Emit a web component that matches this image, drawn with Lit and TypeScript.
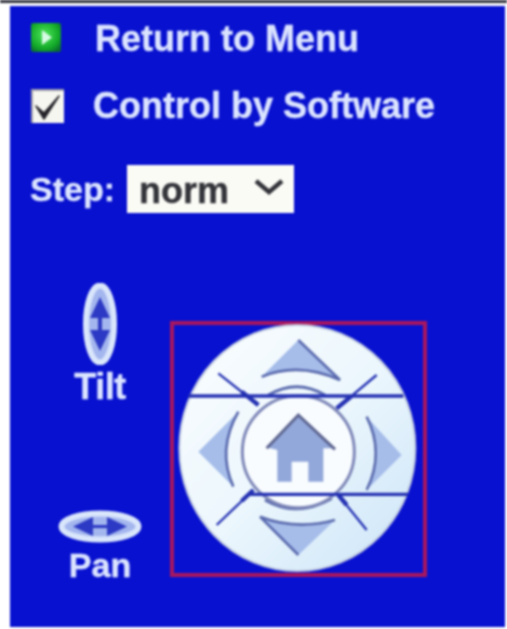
import { LitElement, html, css, svg } from "lit";
import { customElement } from "lit/decorators.js";

const arrowFill = "#a6bdea";
const edge = "#5a6aae";
const line = "#2431b2";

@customElement("app-root")
export class AppRoot extends LitElement {
  static styles = css`
    :host { display: block; width: 507px; height: 629px; background: #fff; overflow: hidden; }
    .page { height: 629px; box-sizing: border-box; border-top: 3px solid #30323c; padding: 3px 2px 2px 10px; filter: blur(0.8px); }
    .panel { height: 621px; box-sizing: border-box; background: #0811cf; padding: 16px 0 0 20px; color: #dbe4ff;
      font: bold 36px/36px "Liberation Sans", Arial, sans-serif; -webkit-text-stroke: 0.4px currentColor; display: flex; flex-direction: column; }
    .row { display: flex; align-items: center; }
    .row1 { height: 30px; gap: 34px; margin-left: 1px; }
    .row1 span { padding-top: 4px; }
    .row2 { height: 34px; gap: 29px; margin: 37px 0 0 1px; }
    .row3 { height: 48px; margin-top: 42px; gap: 12px; font-size: 34px; }
    .play { width: 30px; height: 29px; display: block; }
    .check { width: 33px; height: 34px; display: block; }
    .select { width: 167px; height: 48px; box-sizing: border-box; background: #fbfbf6; color: #33343a; display: flex; align-items: center;
      justify-content: space-between; padding: 3px 10px 0 12px; font-size: 36px; }
    .select svg { width: 30px; height: 16px; display: block; margin-top: -7px; }
    .lower { display: flex; margin-top: 70px; padding-left: 10px; gap: 10px; align-items: flex-start; }
    .side { width: 120px; height: 299px; display: flex; flex-direction: column; justify-content: space-between; align-items: center; }
    .axis { display: flex; flex-direction: column; align-items: center; gap: 5px; }
    .axis span { line-height: 34px; }
    .tname { font-size: 36px; letter-spacing: -0.5px; }
    .pname { font-size: 34px; }
    .tilt { width: 34px; height: 82px; display: block; }
    .pan { width: 84px; height: 33px; display: block; }
    .box { width: 257px; height: 256px; box-sizing: border-box; border: 4px solid #a8175f; margin-top: 38px; }
    .box svg { width: 249px; height: 248px; display: block; overflow: visible; }
  `;

  private pad() {
    return svg`
      <defs>
        <linearGradient id="disc" x1="0" y1="0" x2="1" y2="1">
          <stop offset="0" stop-color="#fbfdff"/>
          <stop offset="0.5" stop-color="#ecf7fd"/>
          <stop offset="1" stop-color="#cbe4f8"/>
        </linearGradient>
      </defs>
      <ellipse cx="412" cy="414" rx="354" ry="369" fill="url(#disc)" stroke="#c0cadf" stroke-width="6"/>

      <path d="M415 90 L540 210 Q415 150 305 200 Q355 150 415 90 Z" fill="${arrowFill}"/>
      <path d="M305 200 Q415 155 540 210 L415 90" fill="none" stroke="${edge}" stroke-width="8"/>
      <path d="M115 425 L235 305 Q165 420 220 530 Z" fill="${arrowFill}"/>
      <path d="M235 305 Q170 420 220 530" fill="none" stroke="${edge}" stroke-width="8"/>
      <path d="M725 435 L620 320 Q685 430 620 540 Z" fill="${arrowFill}"/>
      <path d="M620 320 Q675 430 620 540" fill="none" stroke="${edge}" stroke-width="8"/>
      <path d="M415 735 L300 620 Q410 670 525 630 Z" fill="${arrowFill}"/>
      <path d="M300 620 Q410 662 525 630 M300 620 L415 735" fill="none" stroke="${edge}" stroke-width="8"/>

      <path d="M325 255 Q410 205 495 255" fill="none" stroke="${edge}" stroke-width="9"/>
      <path d="M315 570 Q410 625 515 565" fill="none" stroke="${edge}" stroke-width="9"/>
      <circle cx="415" cy="425" r="168" fill="#f8fcff" stroke="#7f88b8" stroke-width="9"/>

      <path d="M320 412 L415 315 L525 415 L490 415 L490 515 L445 515 L445 455 L395 455 L395 515 L352 515 L352 420 Z" fill="#92a7da"/>
      <path d="M320 415 L415 315 L525 418" fill="none" stroke="#5d6590" stroke-width="9"/>

      <path d="M85 258 H730 M270 553 H745" stroke="${line}" stroke-width="10" fill="none"/>
      <path d="M175 190 L295 285 M650 195 L530 295 M170 645 L280 540 M620 660 L535 555" stroke="${line}" stroke-width="7" fill="none"/>
      <path d="M245 245 L295 285 M575 258 L530 295 M245 573 L280 540 M560 585 L535 555" stroke="${line}" stroke-width="13" fill="none"/>
    `;
  }

  render() {
    return html`
      <div class="page">
        <div class="panel">
          <div class="row row1">
            <svg class="play" viewBox="0 0 30 29">
              <defs>
                <radialGradient id="g" cx="0.45" cy="0.4" r="0.7">
                  <stop offset="0" stop-color="#4ee85a"/>
                  <stop offset="0.7" stop-color="#12a828"/>
                  <stop offset="1" stop-color="#0a6a30"/>
                </radialGradient>
              </defs>
              <rect width="30" height="29" rx="2" fill="url(#g)"/>
              <path d="M11 7 L21 14.5 L11 22 Z" fill="#d8fbe6"/>
            </svg>
            <span>Return to Menu</span>
          </div>
          <div class="row row2">
            <svg class="check" viewBox="0 0 33 34">
              <rect width="33" height="34" fill="#f6f6f0"/>
              <path d="M0 0 H33 V2 H2 V34 H0 Z" fill="#a0a0aa"/>
              <path d="M5 17 L13 24 L28 7 L13 30 Z" fill="#24242a" stroke="#24242a" stroke-width="1.5" stroke-linejoin="round"/>
            </svg>
            <span>Control by Software</span>
          </div>
          <div class="row row3">
            <span>Step:</span>
            <div class="select">
              <span>norm</span>
              <svg viewBox="0 0 30 16"><path d="M2 2 L15 13 L28 2" fill="none" stroke="#33343a" stroke-width="4.5"/></svg>
            </div>
          </div>
          <div class="lower">
            <div class="side">
              <div class="axis">
                <svg class="tilt" viewBox="0 0 34 82">
                  <ellipse cx="17" cy="41" rx="14" ry="38.5" fill="#a4b6ee" stroke="#d9e6fb" stroke-width="6"/>
                  <path d="M17 14 L27 35 H19 V47 H27 L17 68 L7 47 H15 V35 H7 Z" fill="#2c39c4"/>
                </svg>
                <span class="tname">Tilt</span>
              </div>
              <div class="axis">
                <svg class="pan" viewBox="0 0 84 33">
                  <ellipse cx="42" cy="16.5" rx="38.5" ry="13" fill="#a4b6ee" stroke="#d9e6fb" stroke-width="6"/>
                  <path d="M15 16.5 L35 7 V15 H49 V7 L69 16.5 L49 26 V18 H35 V26 Z" fill="#2c39c4"/>
                </svg>
                <span class="pname">Pan</span>
              </div>
            </div>
            <div class="box">
              <svg viewBox="42 45 747 744">${this.pad()}</svg>
            </div>
          </div>
        </div>
      </div>
    `;
  }
}
